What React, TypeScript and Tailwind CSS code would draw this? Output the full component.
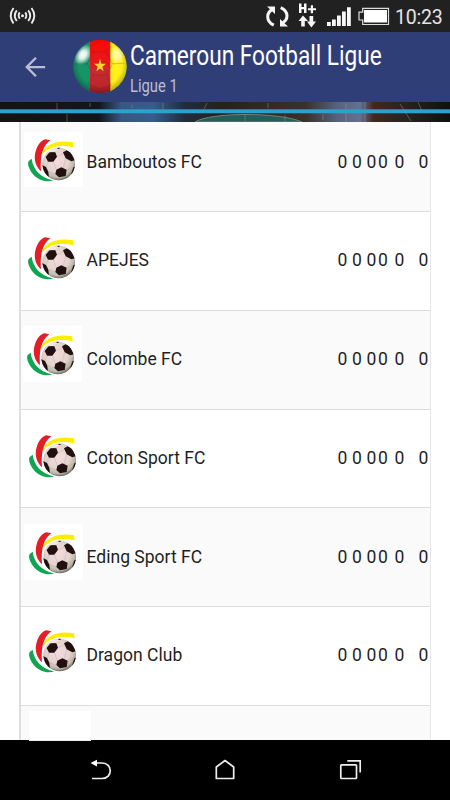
import React from "react";

const robotoStack = "font-['Roboto','Liberation_Sans',sans-serif]";

function TeamLogo() {
  return (
    <svg viewBox="38 43 141 129" className="block h-[43px] w-[47px]">
      <defs>
        <radialGradient id="leather" cx="0.45" cy="0.4" r="0.6">
          <stop offset="0" stopColor="#f4dcdc" />
          <stop offset="0.6" stopColor="#e4d3cf" />
          <stop offset="0.85" stopColor="#bdb9ac" />
          <stop offset="1" stopColor="#6f6f64" />
        </radialGradient>
        <clipPath id="ballClip">
          <circle cx="130" cy="118" r="49" />
        </clipPath>
      </defs>
      <path d="M49 102 C53 134 76 160 114 167 C96 174 70 169 53 149 C41 134 35 118 40 109 Z" fill="#10a651" />
      <path d="M90 44 L105 47 C83 62 73 94 77 140 C61 126 54 104 61 80 C67 60 77 48 90 44 Z" fill="#e31e26" />
      <path d="M78 91 C88 59 124 44 173 53 L175 68 C138 60 105 63 78 91 Z" fill="#fdee00" />
      <circle cx="130" cy="118" r="52" fill="#fff" />
      <circle cx="130" cy="118" r="49" fill="url(#leather)" />
      <g clipPath="url(#ballClip)" fill="#21100f">
        <path d="M103 82 L120 83 L125 96 L114 111 L98 111 L91 97 Z" />
        <path d="M143 83 L154 77 L167 83 L178 107 L168 110 L151 101 Z" />
        <path d="M123 135 L138 128 L154 135 L151 154 L131 158 L120 148 Z" />
        <path d="M80 121 L92 127 L99 141 L101 160 L84 147 Z" />
        <path d="M117 68 L138 68 L130 73 Z" />
        <path d="M174 128 L180 126 L174 148 L167 150 Z" />
        <g fill="none" stroke="#bda6a4" strokeWidth="1.2">
          <path d="M125 96 L143 88 M114 111 L123 135 M151 101 L144 130 M98 111 L92 127 M99 141 L120 148 M154 135 L174 128" />
        </g>
      </g>
      <ellipse cx="114" cy="77" rx="15" ry="4" fill="#fff" opacity="0.45" transform="rotate(-18 114 77)" />
    </svg>
  );
}

function FlagBall() {
  return (
    <svg viewBox="24 12 162 164" className="h-[55px] w-[54px] shrink-0">
      <defs>
        <clipPath id="flagClip">
          <circle cx="105" cy="94" r="80" />
        </clipPath>
        <radialGradient id="flagShade" cx="0.5" cy="0.45" r="0.55">
          <stop offset="0.75" stopColor="#000" stopOpacity="0" />
          <stop offset="1" stopColor="#000" stopOpacity="0.3" />
        </radialGradient>
        <linearGradient id="red" x2="0" y2="1">
          <stop offset="0" stopColor="#ff0800" />
          <stop offset="0.48" stopColor="#e21b20" />
          <stop offset="0.53" stopColor="#c92b31" />
          <stop offset="1" stopColor="#b92229" />
        </linearGradient>
        <radialGradient id="shine">
          <stop offset="0" stopColor="#fff" />
          <stop offset="0.4" stopColor="#fff" stopOpacity="0.85" />
          <stop offset="1" stopColor="#fff" stopOpacity="0" />
        </radialGradient>
      </defs>
      <g clipPath="url(#flagClip)">
        <rect x="20" y="10" width="56" height="170" fill="#149467" />
        <rect x="135" y="10" width="55" height="170" fill="#fff019" />
        <ellipse cx="54" cy="59" rx="24" ry="34" fill="url(#shine)" transform="rotate(35 54 59)" />
        <ellipse cx="156" cy="58" rx="24" ry="28" fill="url(#shine)" opacity="0.65" />
        <rect x="75" y="10" width="61" height="170" fill="url(#red)" />
        <g fill="none" stroke="#4b2430" strokeOpacity="0.4" strokeWidth="1.7">
          <path d="M84 51 L123 50 L142 86 L124 119 L85 120 L67 86 Z" />
          <path d="M84 51 L75 34 L105 18 M123 50 L137 33 M142 86 L178 84 M124 119 L138 151 M85 120 L70 146 M67 86 L32 86 M70 146 L105 162 L138 151" />
        </g>
        <circle cx="105" cy="94" r="80" fill="url(#flagShade)" />
      </g>
      <path d="M105 71 L109 86 L123 86 L112 95 L116 108 L105 100 L94 108 L98 95 L87 86 L101 86 Z" fill="#ffd329" />
    </svg>
  );
}

function StatusBar() {
  return (
    <div className="flex h-8 shrink-0 items-start justify-between bg-[#212121]">
      <svg viewBox="0 0 60 32" className="h-8 w-[60px]" fill="none" stroke="#ededed" strokeWidth="1.9">
        <path d="M13.5 8 Q8 15.5 13.5 23.5 M16.8 10.3 Q12.8 15.5 16.8 21 M19.8 12.4 Q17.5 15.5 19.8 18.8 M31.5 8 Q37 15.5 31.5 23.5 M28.2 10.3 Q32.2 15.5 28.2 21 M25.2 12.4 Q27.5 15.5 25.2 18.8" />
        <circle cx="22.5" cy="15.7" r="1.5" fill="#ededed" stroke="none" />
      </svg>
      <div className="flex">
        <svg viewBox="260 0 130 32" className="h-8 w-[130px]">
          <g fill="none" stroke="#f5f5f5" strokeWidth="3">
            <path d="M273.5 9 C266 12 265.5 21 273.8 25.2" />
            <path d="M281.2 23.5 C289 20 289 11.5 280.7 7.7" />
          </g>
          <path d="M267 6.5 H275 V14 Z M280 19 V26.5 H288 Z" fill="#f5f5f5" />
          <path d="M299 3.5 H301.5 V7 H304 V3.5 H306.5 V13 H304 V9.3 H301.5 V13 H299 Z M310.8 5.3 H313 V8.3 H316 V10.3 H313 V13.3 H310.8 V10.3 H308 V8.3 H310.8 Z M303 15.5 L308 21 H304.8 V26.5 H301.2 V21 H298.5 Z M309.5 16 H313.2 V21.5 H316 L311.4 27.5 L307 21.5 H309.5 Z" fill="#f7f7f7" />
          <path d="M327 22 H330.8 V26 H327 Z M332 19.5 H335.8 V26 H332 Z M337 15.5 H340.8 V26 H337 Z M342 11.5 H345.8 V26 H342 Z M347 7.3 H350.8 V26 H347 Z" fill="#f7f7f7" />
          <path d="M362.7 8.3 H388.5 V24.5 H362.7 V20 H359 V12.2 H362.7 Z" fill="none" stroke="#ddd" strokeWidth="1.2" />
          <path d="M364 10 H387 V22.5 H364 Z" fill="#fff" />
        </svg>
        <span className="ml-[5px] w-[55px] whitespace-nowrap pt-[7px] text-[19.5px] leading-[21px] tracking-[-0.2px] text-[#e4e4e4]">10:23</span>
      </div>
    </div>
  );
}

function AppBar() {
  return (
    <header className="flex h-[70px] shrink-0 bg-[#303e78]">
      <svg viewBox="0 0 24 24" className="ml-[25px] mt-[25px] h-5 w-[21px] shrink-0" preserveAspectRatio="none" fill="none" stroke="#b9bed2" strokeWidth="2.7">
        <path d="M12.5 1 L2 12 L12.5 23 M2 12 H23" />
      </svg>
      <div className="ml-[27px] mt-[7px]">
        <FlagBall />
      </div>
      <div className="ml-[3px] pt-[9px]">
        <h1 className="origin-left scale-x-[0.832] whitespace-nowrap text-[27.2px] leading-[30px] text-white">Cameroun Football Ligue</h1>
        <p className="mt-[5px] origin-left scale-x-[0.82] whitespace-nowrap text-[18px] leading-[20px] text-[#b9bed2]">Ligue 1</p>
      </div>
    </header>
  );
}

function StadiumBanner() {
  return (
    <svg viewBox="0 0 450 20" className="h-5 w-full shrink-0">
      <defs>
        <linearGradient id="night">
          <stop offset="0" stopColor="#171214" />
          <stop offset="0.22" stopColor="#14151c" />
          <stop offset="0.27" stopColor="#385782" />
          <stop offset="0.34" stopColor="#365d8c" />
          <stop offset="0.41" stopColor="#202c3e" />
          <stop offset="0.49" stopColor="#28201d" />
          <stop offset="0.68" stopColor="#3c302d" />
          <stop offset="0.75" stopColor="#59627e" />
          <stop offset="0.8" stopColor="#64718f" />
          <stop offset="0.83" stopColor="#44271f" />
          <stop offset="0.9" stopColor="#282321" />
          <stop offset="1" stopColor="#11100f" />
        </linearGradient>
      </defs>
      <rect width="450" height="20" fill="url(#night)" />
      <path d="M195 20 C210 10 280 10 302 20 Z" fill="#265c59" stroke="#718276" strokeWidth="1" />
      <path d="M57 1 V8 M67 12 V20 M90 1 V5 M132 3 V6 M163 1 V8 M207 1 L204 7 M245 12 V19 M268 1 V6 M285 13 V20 M323 12 V18 M346 1 V20 M365 0 V20 M400 2 L411 19 M418 0 L422 9" stroke="#a79e96" strokeWidth="0.7" opacity="0.6" />
      <rect y="7.3" width="450" height="4" fill="#2f9fcb" />
    </svg>
  );
}

const teams = [
  { name: "Bamboutos FC", row: "h-[90px] bg-[#fafafa]", box: "pl-[4px] ml-[3px] mt-[10px] pt-[7px] w-[59px] h-[55px] bg-white", text: "pt-[28px]" },
  { name: "APEJES", row: "h-[99px] bg-white", box: "pl-[4px] ml-[3px] mt-[18px] pt-[7px] w-[59px] h-[55px]", text: "pt-[36px]" },
  { name: "Colombe FC", row: "h-[99px] bg-[#fafafa]", box: "pl-[4px] ml-[2px] mr-px mt-[15px] pt-[7px] w-[59px] h-[56px] bg-white", text: "pt-[36px]" },
  { name: "Coton Sport FC", row: "h-[98px] bg-white", box: "pl-[5px] ml-[3px] mt-[18px] pt-[7px] w-[59px] h-[55px]", text: "pt-[36px]" },
  { name: "Eding Sport FC", row: "h-[99px] bg-[#fafafa]", box: "pl-[5px] ml-[3px] mt-[16px] pt-[8px] w-[59px] h-[56px] bg-white", text: "pt-[37px]" },
  { name: "Dragon Club", row: "h-[99px] bg-white", box: "pl-[5px] ml-[3px] mt-[16px] pt-[7px] w-[59px] h-[55px]", text: "pt-[36px]" },
];

function TeamRow({ team }: { team: (typeof teams)[number] }) {
  return (
    <div className={`flex border-b border-[#dcdcdc] ${team.row}`}>
      <div className={`shrink-0 ${team.box}`}>
        <TeamLogo />
      </div>
      <div className={`ml-[3.5px] flex-1 whitespace-nowrap text-[17.5px] leading-6 tracking-[0.02px] text-[#1f1f1f] ${team.text}`}>{team.name}</div>
      <div className={`flex shrink-0 text-[17.5px] leading-6 text-[#1f1f1f] ${team.text}`}>
        <span className="w-[14.5px]">0</span>
        <span className="w-[14.5px]">0</span>
        <span className="w-[11.5px]">0</span>
        <span className="w-[16.5px]">0</span>
        <span className="w-[24px]">0</span>
        <span className="w-[11.5px]">0</span>
      </div>
    </div>
  );
}

function Standings() {
  return (
    <main className="flex min-h-0 flex-1 flex-col overflow-hidden bg-white pl-[19px] pr-[19px]">
      <div className="border-l-2 border-r border-l-[#dedede] border-r-[#e8e8e8]">
        {teams.map((team) => (
          <TeamRow key={team.name} team={team} />
        ))}
        <div className="h-[34px] bg-[#fafafa] pl-2 pt-[5px]">
          <div className="h-[29px] w-[62px] bg-white" />
        </div>
      </div>
    </main>
  );
}

function NavigationBar() {
  return (
    <nav className="h-[60px] shrink-0 bg-black">
      <svg viewBox="0 0 450 60" className="block h-[60px] w-full" fill="none" stroke="#eee" strokeWidth="1.7">
        <path d="M29 .5 H91" strokeWidth="1" />
        <path d="M95 23 H102 C113 23 113 38.5 102 38.5 H92" />
        <path d="M90.5 23 L97 19.8 V26.5 Z" fill="#fff" stroke="none" />
        <path d="M216.3 38.5 V27 L225 20.5 L233.7 27 V38.5 Z" strokeLinejoin="round" />
        <rect x="340.8" y="24.8" width="15.7" height="13.7" rx=".7" />
        <path d="M347.3 20.8 H360.2 V32.5" />
      </svg>
    </nav>
  );
}

export default function App() {
  return (
    <div className={`flex h-[800px] w-[450px] flex-col overflow-hidden bg-white ${robotoStack}`}>
      <StatusBar />
      <AppBar />
      <StadiumBanner />
      <Standings />
      <NavigationBar />
    </div>
  );
}
